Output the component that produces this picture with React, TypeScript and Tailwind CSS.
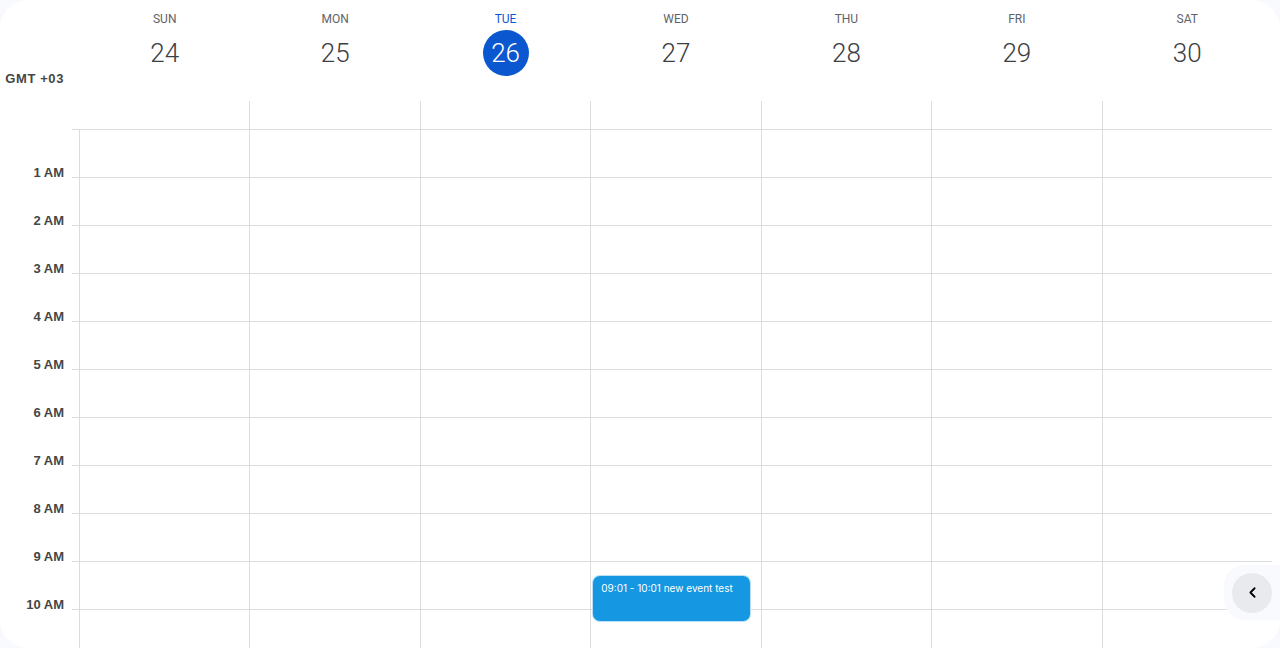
import { ChevronLeft } from 'lucide-react'

const days = [
  { name: 'SUN', date: 24 },
  { name: 'MON', date: 25 },
  { name: 'TUE', date: 26, today: true },
  { name: 'WED', date: 27 },
  { name: 'THU', date: 28 },
  { name: 'FRI', date: 29 },
  { name: 'SAT', date: 30 },
]

const hours = Array.from({ length: 11 }, (_, i) => i)

function hourLabel(h: number) {
  if (h === 0) return ''
  if (h < 12) return `${h} AM`
  if (h === 12) return '12 PM'
  return `${h - 12} PM`
}

export default function App() {
  return (
    <div className="relative h-[648px] w-[1280px] overflow-hidden bg-[#f8fafd] font-['Roboto',sans-serif]">
      <div className="flex h-full flex-col overflow-hidden rounded-[28px] bg-white pr-2">
        {/* header */}
        <div className="flex h-[101px] shrink-0">
          <div className="w-[79px] shrink-0 pr-[15px] pt-[71px] text-right font-['Liberation_Sans',sans-serif] text-[13px] font-bold leading-[15px] tracking-[0.6px] text-[#444746]">
            GMT +03
          </div>
          {days.map(d => (
            <div key={d.name} className="flex flex-1 flex-col items-center border-l border-transparent pt-[11px]">
              <span
                className={
                  d.today
                    ? 'text-[12px] leading-[16px] text-[#0b57d0]'
                    : 'text-[12px] leading-[16px] text-[#5f6368]'
                }
              >
                {d.name}
              </span>
              <span
                className={
                  d.today
                    ? 'mt-[3px] flex h-[46px] w-[46px] items-center justify-center rounded-full bg-[#0b57d0] text-[26px] font-light text-white'
                    : 'mt-[3px] flex h-[46px] w-[46px] items-center justify-center rounded-full text-[26px] font-light text-[#3c4043]'
                }
              >
                {d.date}
              </span>
            </div>
          ))}
        </div>

        {/* all-day strip */}
        <div className="flex h-[28px] shrink-0">
          <div className="w-[79px] shrink-0" />
          {days.map((d, i) => (
            <div
              key={d.name}
              className={i === 0 ? 'flex-1 border-l border-transparent' : 'flex-1 border-l border-[#dadce0]'}
            />
          ))}
        </div>

        {/* hour grid */}
        <div className="flex-1 overflow-hidden">
          {hours.map(h => (
            <div key={h} className="flex h-12">
              <div className="w-[72px] shrink-0 pr-2 text-right font-['Liberation_Sans',sans-serif] text-[13px] font-bold leading-[15px] text-[#444746]">
                {h > 0 && <div className="-mt-[12px]">{hourLabel(h)}</div>}
              </div>
              <div className="w-[7px] shrink-0 border-t border-[#dadce0]" />
              {days.map(d => (
                <div key={d.name} className="relative flex-1 border-l border-t border-[#dadce0]">
                  {h === 9 && d.name === 'WED' && (
                    <div className="absolute left-[1px] right-[10px] top-[13px] z-10 h-[47px] rounded-[8px] border border-white/70 bg-[#1597e1] px-2 pt-[6px] font-['Inter',sans-serif] text-[10px] leading-[12px] text-white">
                      09:01 - 10:01 new event test
                    </div>
                  )}
                </div>
              ))}
            </div>
          ))}
        </div>
      </div>

      {/* side panel toggle */}
      <div className="absolute right-0 top-[565px] flex h-[55px] w-[56px] items-center rounded-l-[20px] bg-[#f8fafd] pl-[8px]">
        <button className="flex h-10 w-10 items-center justify-center rounded-full bg-[#e9eaee] text-black">
          <ChevronLeft size={17} strokeWidth={2.5} />
        </button>
      </div>
    </div>
  )
}
